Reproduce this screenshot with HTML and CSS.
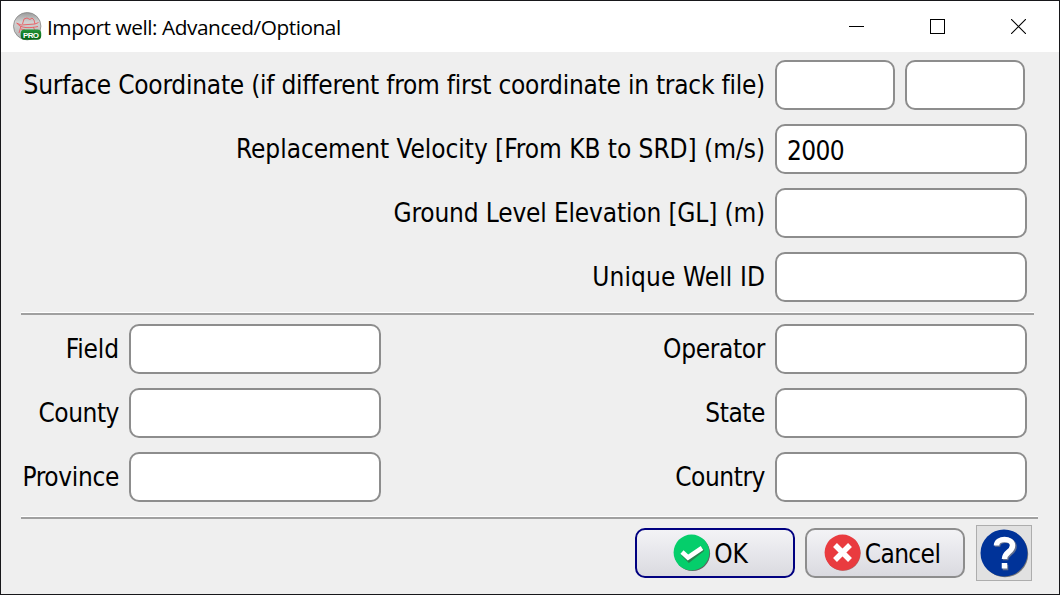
FILE: index.html
```html
<!DOCTYPE html>
<html lang="en">
<head>
<meta charset="utf-8">
<title>Import well: Advanced/Optional</title>
<link rel="stylesheet" href="styles.css">
</head>
<body>
<div class="window">
  <header class="titlebar">
    <svg class="app-icon" width="30" height="30" viewBox="0 0 30 30">
      <defs>
        <linearGradient id="ball" x1="0" y1="0" x2="0" y2="1"><stop offset="0" stop-color="#999"/><stop offset=".35" stop-color="#d2d2d2"/><stop offset="1" stop-color="#b4b4b4"/></linearGradient>
        <linearGradient id="pro" x1="0" y1="0" x2="0" y2="1"><stop offset="0" stop-color="#239438"/><stop offset="1" stop-color="#046413"/></linearGradient>
      </defs>
      <circle cx="14.2" cy="14.2" r="13.7" fill="url(#ball)" stroke="#858585" stroke-width=".8"/>
      <path d="M9.500 12L11 7L14 6L17 7.500L19 6L21 8L22 12M3.500 11L8 13L22 12L25.500 10.500M4 11C7 17 18 16 25 14.500M8 14L6 21M8 17L12 18M20 15L22 18" fill="none" stroke="#eb5a60" stroke-width=".9"/>
      <rect x="7.700" y="17.500" width="20.500" height="10.200" rx="4" fill="url(#pro)"/>
      <text class="pro-text" x="18" y="25.500" text-anchor="middle" textLength="16">PRO</text>
    </svg>
    <h1 class="title">Import well: Advanced/Optional</h1>
    <div class="controls">
      <svg width="15" height="15"><path d="M0 7.500H15" stroke="#000"/></svg>
      <svg width="15" height="15"><rect x=".5" y=".5" width="14" height="14" fill="none" stroke="#000"/></svg>
      <svg width="15" height="15"><path d="M0 0L15 15M15 0L0 15" stroke="#000" stroke-width="1.100"/></svg>
    </div>
  </header>
  <main class="form">
    <section class="group">
      <div class="row"><label class="t-surface" for="x">Surface Coordinate (if different from first coordinate in track file)</label><div class="slot"><input id="x" class="field half"><input class="field half" aria-label="Y"></div></div>
      <div class="row"><label class="t-velocity" for="rv">Replacement Velocity [From KB to SRD] (m/s)</label><div class="slot"><input id="rv" class="field" value="2000"></div></div>
      <div class="row"><label class="t-ground" for="gl">Ground Level Elevation [GL] (m)</label><div class="slot"><input id="gl" class="field"></div></div>
      <div class="row"><label class="t-unique" for="id">Unique Well ID</label><div class="slot"><input id="id" class="field"></div></div>
    </section>
    <div class="rule"></div>
    <section class="group pairs">
      <div class="row"><label class="t-field" for="fi">Field</label><input id="fi" class="field"></div>
      <div class="row"><label class="t-operator" for="op">Operator</label><div class="slot"><input id="op" class="field"></div></div>
      <div class="row"><label class="t-county" for="co">County</label><input id="co" class="field"></div>
      <div class="row"><label class="t-state" for="st">State</label><div class="slot"><input id="st" class="field"></div></div>
      <div class="row"><label class="t-province" for="pr">Province</label><input id="pr" class="field"></div>
      <div class="row"><label class="t-country" for="cn">Country</label><div class="slot"><input id="cn" class="field"></div></div>
    </section>
    <div class="rule wide"></div>
    <footer class="actions">
      <button class="btn primary"><svg width="38" height="38" viewBox="0 0 38 38"><circle cx="19.500" cy="19.500" r="17.600" fill="#606060"/><circle cx="18.500" cy="18.500" r="17.900" fill="#05ce6b"/><path d="M10 20L16 26L30 15" fill="none" stroke="#27824f" stroke-width="4.500"/><path d="M9 18L15 23.500L29 14" fill="none" stroke="#fff" stroke-width="4.600"/></svg><span>OK</span></button>
      <button class="btn cancel"><svg width="38" height="38" viewBox="0 0 38 38"><circle cx="19" cy="19.200" r="17.600" fill="#a66"/><circle cx="18.500" cy="18.500" r="17.900" fill="#e93b3f"/><path d="M11 11L26 26M26 11L11 26" stroke="#fff" stroke-width="5.500"/></svg><span>Cancel</span></button>
      <button class="help" aria-label="Help"><svg width="50" height="50" viewBox="0 0 50 50"><circle cx="26" cy="26" r="23.200" fill="#777"/><circle cx="25" cy="25" r="23.500" fill="#003399"/><path d="M17.500 17.500C17.500 9 34 9 34 17.500C34 24 25.500 24 25.500 31M25.500 35.500V41" transform="translate(1 1.200)" fill="none" stroke="#64718f" stroke-width="5.500"/><path d="M17.500 17.500C17.500 9.500 33.500 9.500 33.500 17.500C33.500 24 25.500 24 25.500 31M25.500 35V40.500" fill="none" stroke="#fff" stroke-width="5.500"/></svg></button>
    </footer>
  </main>
</div>
</body>
</html>
```
FILE: styles.css
```css
* { box-sizing: border-box; }
body { margin: 0; font: 26px/50px "DejaVu Sans Condensed", "DejaVu Sans", sans-serif; color: #000; }
.window { width: 1060px; height: 595px; background: #efefef; border: 1px solid #17171a; overflow: hidden; }
.titlebar { height: 51px; background: #fff; display: flex; align-items: center; padding: 0 33px 0 12px; }
.app-icon { display: block; }
.pro-text { font: bold 8px "Liberation Sans", sans-serif; fill: #fff; }
.title { margin: 2px 0 0 4px; font: 20.8px/49px "Open Sans", sans-serif; letter-spacing: -.44px; white-space: nowrap; }
.controls { display: flex; gap: 66px; margin-left: auto; }
.controls svg { display: block; }
.form { padding: 8px 0 0 20px; }
.group { display: grid; row-gap: 14px; width: 1006px; }
.pairs { grid-template-columns: 360px 646px; }
.row { display: flex; justify-content: flex-end; gap: 10px; height: 50px; }
.row label { white-space: nowrap; line-height: 50px; }
.t-surface { letter-spacing: -.24px; }
.t-velocity { letter-spacing: -.04px; }
.t-ground { letter-spacing: -.16px; }
.t-unique { letter-spacing: .1px; }
.t-field { letter-spacing: -.1px; }
.t-operator, .t-province { letter-spacing: -.35px; }
.t-county, .t-state, .t-country { letter-spacing: -.45px; }
.slot { flex: none; width: 252px; display: flex; gap: 10px; }
.field { flex: none; width: 252px; height: 50px; border: 2px solid #8d8d8d; border-radius: 10px; background: #fff; padding: 4px 10px 0; font: inherit; line-height: 42px; letter-spacing: -.6px; color: #000; outline: 0; }
.half { width: 120px; }
.rule { width: 1013px; height: 3px; margin: 10px 0 9px; background: #a0a0a0; border-top: 1px solid #fff; }
.wide { width: 1017px; margin: 14px 0 6px; }
.actions { display: flex; align-items: center; gap: 10px; justify-content: flex-end; width: 1011px; }
.btn { width: 160px; height: 50px; padding: 0; border: 2px solid #8d8d8d; border-radius: 10px; background: linear-gradient(#f3f3f6, #dadae0); font: inherit; line-height: 48px; color: #000; display: flex; align-items: center; justify-content: center; gap: 3px; letter-spacing: -.6px; }
.btn span { padding-top: 2px; }
.primary { border-color: #000080; padding-right: 9px; letter-spacing: 0; }
.cancel { padding-right: 6px; }
.help { width: 56px; height: 56px; margin-left: 1px; padding: 2px; border: 1px solid #adadad; background: #e1e1e1; }
.help svg, .btn svg { display: block; }
```
